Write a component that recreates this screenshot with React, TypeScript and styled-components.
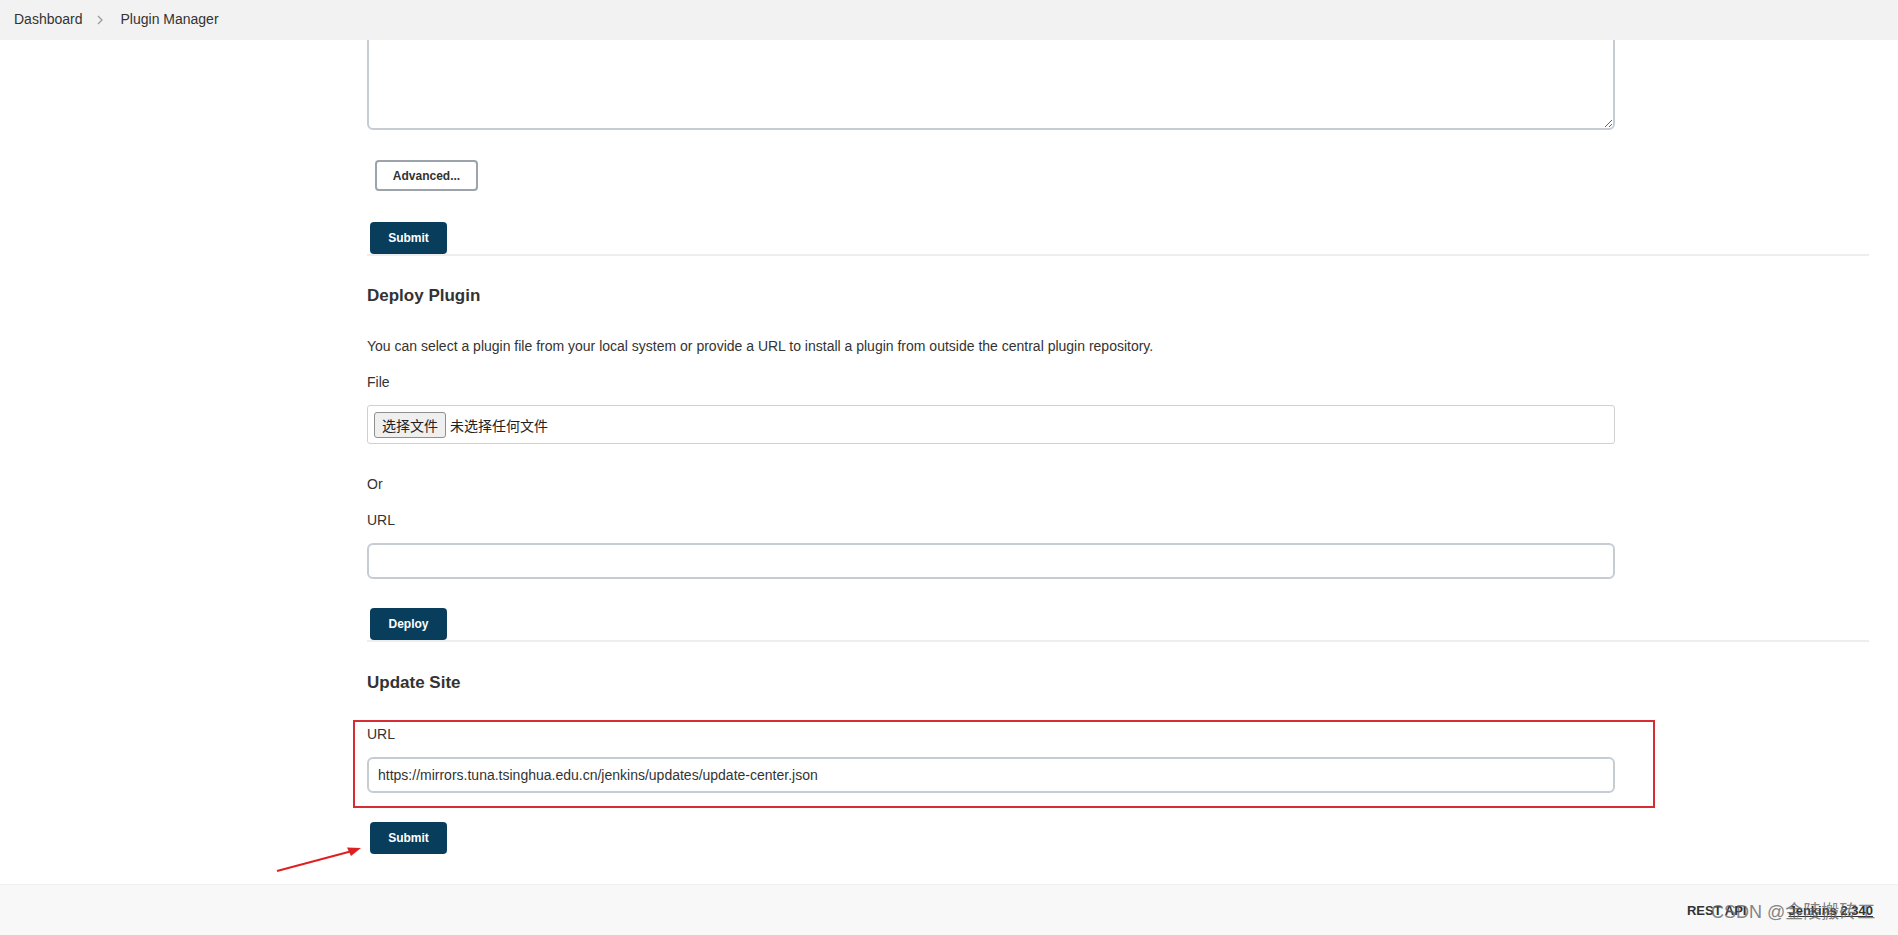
import React from 'react'
import styled, { createGlobalStyle } from 'styled-components'

const GlobalStyle = createGlobalStyle`
	html, body {
		margin: 0;
		padding: 0;
		background: #fff;
	}
	body {
		font-family: 'Liberation Sans', Arial, 'Noto Sans CJK SC', sans-serif;
		color: #333;
		font-size: 14px;
	}
`

const Page = styled.div`
	position: relative;
	width: 1898px;
	height: 935px;
	display: flex;
	flex-direction: column;
	overflow: hidden;
`

const Breadcrumbs = styled.nav`
	height: 40px;
	flex: none;
	background: #f2f2f2;
	display: flex;
	align-items: center;
	padding: 0 0 2px 14px;
	box-sizing: border-box;
	font-size: 14px;
	color: #333;
	position: relative;
	z-index: 2;
	a {
		color: inherit;
		text-decoration: none;
	}
`

const Chevron = styled.svg`
	width: 6px;
	height: 10px;
	margin: 1px 18px 0 14px;
`

const Main = styled.main`
	flex: 1;
	overflow: hidden;
	padding: 0 29px 0 367px;
`

const Content = styled.div`
	display: flex;
	flex-direction: column;
	align-items: flex-start;
`

const TextArea = styled.textarea`
	box-sizing: border-box;
	width: 1248px;
	height: 130px;
	margin-top: -40px;
	border: 2px solid #c6ccd1;
	border-radius: 6px;
	resize: vertical;
	outline: none;
	font: inherit;
`

const SecondaryButton = styled.button`
	margin: 30px 0 0 8px;
	width: 103px;
	height: 31px;
	box-sizing: border-box;
	border: 2px solid #9ca3aa;
	border-radius: 4px;
	background: #fff;
	color: #333;
	font-family: 'Liberation Sans', Arial, sans-serif;
	font-weight: bold;
	font-size: 12px;
	padding: 0;
`

const Actions = styled.div<{ $top: number; $line?: boolean }>`
	margin-top: ${(p) => p.$top}px;
	align-self: stretch;
	padding-left: 3px;
	display: flex;
	border-bottom: ${(p) => (p.$line ? '2px solid #eeeeee' : 'none')};
`

const PrimaryButton = styled.button`
	width: 77px;
	height: 32px;
	box-sizing: border-box;
	border: none;
	border-radius: 4px;
	background: #093d5c;
	color: #fff;
	font-family: 'Liberation Sans', Arial, sans-serif;
	font-weight: bold;
	font-size: 12px;
	padding: 0;
`

const Heading = styled.h2<{ $top: number }>`
	margin: ${(p) => p.$top}px 0 0;
	font-size: 17px;
	line-height: 22px;
	font-weight: bold;
	color: #333;
`

const Text = styled.p<{ $top: number }>`
	margin: ${(p) => p.$top}px 0 0;
	font-size: 14px;
	line-height: 20px;
`

const Label = styled.label<{ $top: number }>`
	display: block;
	margin-top: ${(p) => p.$top}px;
	font-size: 14px;
	line-height: 20px;
`

const FileBox = styled.div`
	margin-top: 13px;
	box-sizing: border-box;
	width: 1248px;
	height: 39px;
	border: 1px solid #d0d0d0;
	border-radius: 3px;
	display: flex;
	align-items: center;
	padding-left: 6px;
	font-family: 'Liberation Sans', 'Noto Sans CJK SC', sans-serif;
	font-size: 14px;
	color: #222;
`

const FilePick = styled.span`
	box-sizing: border-box;
	height: 26px;
	padding: 0 7px;
	display: inline-flex;
	align-items: center;
	background: #efefef;
	border: 1px solid #8f8f8f;
	border-radius: 3px;
	margin-right: 4px;
`

const TextInput = styled.input<{ $top: number }>`
	margin-top: ${(p) => p.$top}px;
	box-sizing: border-box;
	width: 1248px;
	height: 36px;
	border: 2px solid #c6ccd1;
	border-radius: 6px;
	padding: 0 9px;
	font-family: 'Liberation Sans', Arial, sans-serif;
	font-size: 14px;
	color: #333;
	outline: none;
`

const Highlight = styled.div`
	margin: 26px 0 0 -14px;
	box-sizing: border-box;
	width: 1302px;
	border: 2px solid #d62d35;
	padding: 2px 0 13px 12px;
`

const Footer = styled.footer`
	height: 51px;
	flex: none;
	background: #f8f8f8;
	border-top: 1px solid #f0f0f0;
	box-sizing: border-box;
	display: flex;
	align-items: center;
	justify-content: flex-end;
	gap: 42px;
	padding: 0 25px 0 0;
	a {
		color: #333;
		font-family: 'Liberation Sans', Arial, sans-serif;
		font-size: 13px;
		font-weight: bold;
		text-decoration: none;
	}
	a.version {
		text-decoration: underline;
	}
`

const Watermark = styled.div`
	position: absolute;
	left: 1711px;
	top: 900px;
	font-family: 'Liberation Sans', 'Noto Sans CJK SC', sans-serif;
	font-size: 18px;
	line-height: 24px;
	color: rgba(100, 100, 100, 0.8);
	white-space: nowrap;
	pointer-events: none;
`

const Arrow = styled.svg`
	position: absolute;
	left: 270px;
	top: 840px;
	width: 100px;
	height: 40px;
`

export default function App() {
	return (
		<Page>
			<GlobalStyle />
			<Breadcrumbs>
				<a href="#">Dashboard</a>
				<Chevron viewBox="0 0 6 10">
					<path d="M1 1 L5 5 L1 9" fill="none" stroke="#999" strokeWidth="1.2" />
				</Chevron>
				<a href="#">Plugin Manager</a>
			</Breadcrumbs>
			<Main>
				<Content>
					<TextArea />
					<SecondaryButton>Advanced...</SecondaryButton>
					<Actions $top={31} $line>
						<PrimaryButton>Submit</PrimaryButton>
					</Actions>

					<Heading $top={29}>Deploy Plugin</Heading>
					<Text $top={29}>
						You can select a plugin file from your local system or provide a URL to install a
						plugin from outside the central plugin repository.
					</Text>
					<Label $top={16}>File</Label>
					<FileBox>
						<FilePick>选择文件</FilePick>
						未选择任何文件
					</FileBox>
					<Text $top={30}>Or</Text>
					<Label $top={16}>URL</Label>
					<TextInput $top={13} defaultValue="" />
					<Actions $top={29} $line>
						<PrimaryButton>Deploy</PrimaryButton>
					</Actions>

					<Heading $top={30}>Update Site</Heading>
					<Highlight>
						<Label $top={0}>URL</Label>
						<TextInput
							$top={13}
							defaultValue="https://mirrors.tuna.tsinghua.edu.cn/jenkins/updates/update-center.json"
						/>
					</Highlight>
					<Actions $top={14}>
						<PrimaryButton>Submit</PrimaryButton>
					</Actions>
				</Content>
			</Main>
			<Footer>
				<a href="#">REST API</a>
				<a href="#" className="version">
					Jenkins 2.340
				</a>
			</Footer>
			<Watermark>CSDN @金陵搬砖工</Watermark>
			<Arrow viewBox="0 0 100 40">
				<line x1="7" y1="31" x2="84" y2="10.5" stroke="#e02020" strokeWidth="2" />
				<polygon points="91,8 77,7.5 81,16" fill="#e02020" />
			</Arrow>
		</Page>
	)
}
